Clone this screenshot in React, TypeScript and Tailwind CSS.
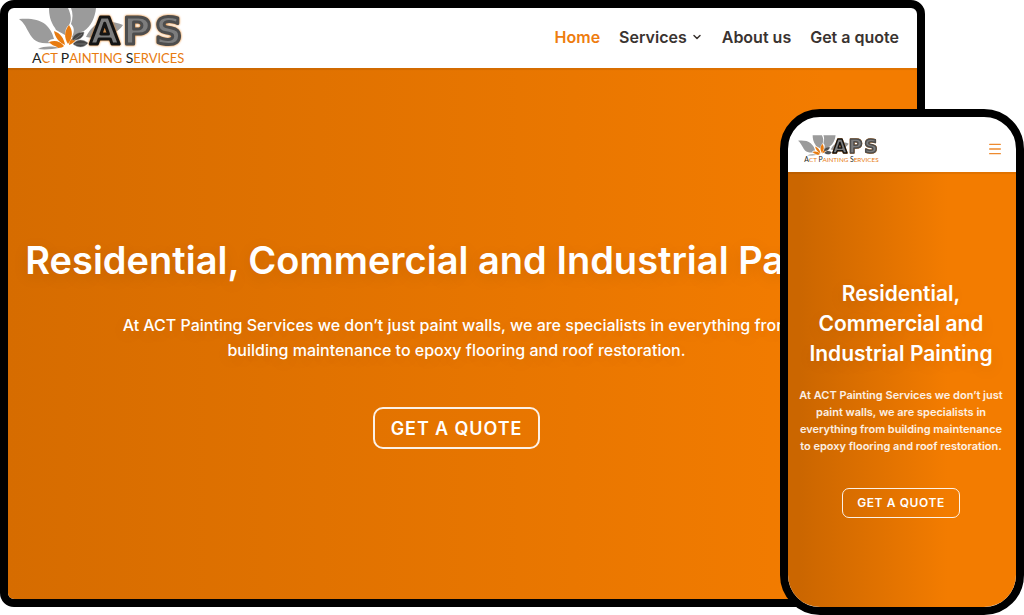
import { ChevronDown, Menu } from 'lucide-react';

const LEAD =
  'At ACT Painting Services we don’t just paint walls, we are specialists in everything from building maintenance to epoxy flooring and roof restoration.';

const navLinks = [
  { label: 'Home', active: true },
  { label: 'Services', hasMenu: true },
  { label: 'About us' },
  { label: 'Get a quote' },
];

function Logo({ className }: { className: string }) {
  return (
    <svg viewBox="0 0 168 56" className={className} role="img" aria-label="APS, ACT Painting Services">
      {/* Grey leaves */}
      <g fill="#9b9b9b">
        <path d="M0 11c10-1 20 0 26 5 6 5 8 11 9 15-3 0-5 1-6 3l4 1C16 37 13 30 9 23 6 17 4 14 0 11z" />
        <path d="M30 0h19c3 6 4 13 1 17-3 2-4 6-4 10l-9-5-1-2C31 13 30 6 30 0z" />
        <path d="M52 0h25c-1 10-5 18-12 23-4 1-8 4-11 7l-1-1c3-6 2-10-1-13 2-6 2-11 0-16z" />
        <path d="M67 29c4-8 9-14 18-15 7-1 14 1 19 3-6 9-20 16-37 12z" />
        <path d="M19 41c6-3 14-3 21-1-6 1-14 2-21 1z" />
      </g>
      {/* Orange petals */}
      <g fill="#e87b10">
        <path d="M35 23c6 2 10 7 11 14-5-2-10-7-11-14z" />
        <path d="M50 17c4 6 4 12-1 19-4-6-4-13 1-19z" />
        <path d="M30 34c6-2 11-1 15 4-1 1-3 2-6 2-1-2-6-2-9-6z" />
        <path d="M58 27c0 5-3 8-8 10 0-5 4-8 8-10z" />
      </g>
      {/* Dark leaves */}
      <g fill="#454545" stroke="#9b9b9b" strokeWidth="0.5">
        <path d="M53 32c1-5 5-8 12-8 0 5-5 9-12 8z" />
        <path d="M54 36c4-5 10-5 15-1-4 5-10 5-15 1z" />
        <path d="M55 32l8-6M56 36h11" />
      </g>
      <text
        x="71 104 136"
        y="36"
        fontFamily="'DejaVu Sans', sans-serif"
        fontWeight="700"
        fontSize="38"
        fill="#7d7d7d"
        stroke="#4d4d4d"
        strokeWidth="3"
        strokeLinejoin="round"
        className="[filter:drop-shadow(0_0_1px_#e87b10)]"
      >
        <tspan stroke="#141414">A</tspan>PS
      </text>
      <text x="13" y="55" fontFamily="Lato, sans-serif" fontSize="13" fill="#e87b10">
        <tspan fill="#222" fontSize="14">A</tspan>CT <tspan fill="#222" fontSize="14">P</tspan>AINTING{' '}
        <tspan fill="#222" fontSize="14">S</tspan>ERVICES
      </text>
    </svg>
  );
}

function DesktopPreview() {
  return (
    <section className="flex min-h-[607px] w-full flex-col overflow-hidden rounded-[14px] border-8 border-black bg-white">
      <header className="flex h-[60px] shrink-0 items-center justify-between pb-0.5 pl-[11px] pr-[18px]">
        <Logo className="h-14 w-[168px] self-start overflow-visible" />
        <nav className="flex items-center gap-[19px] text-[16px] font-semibold text-[#3a3330]">
          {navLinks.map((link) => (
            <a key={link.label} href="#" className={link.active ? 'text-[#ee7c0e]' : 'flex items-center gap-1'}>
              {link.label}
              {link.hasMenu && <ChevronDown size={12} strokeWidth={3} />}
            </a>
          ))}
        </nav>
      </header>
      <div className="flex flex-1 flex-col items-center bg-linear-to-r from-[#d66c00] to-[#f37c00] to-90% pr-3 pt-[168px] text-center text-white shadow-[inset_0_2px_1px_rgba(0,0,0,0.08)]">
        <h1 className="text-[38px] leading-[48px] font-semibold whitespace-nowrap [text-shadow:0_4px_16px_rgba(0,0,0,0.1)]">
          Residential, Commercial and Industrial Painting
        </h1>
        <p className="mt-[29px] max-w-[700px] text-[16px] leading-[25px] font-medium [text-shadow:0_4px_16px_rgba(0,0,0,0.1)]">
          {LEAD}
        </p>
        <button className="mt-11 h-[42px] rounded-[10px] border-2 border-white/90 px-4 text-[18px] font-semibold tracking-wider">
          GET A QUOTE
        </button>
      </div>
    </section>
  );
}

function PhonePreview() {
  return (
    <section className="absolute right-0 bottom-0 flex min-h-[506px] w-[244px] flex-col overflow-hidden rounded-[40px] border-8 border-black bg-white">
      <header className="flex h-[55px] shrink-0 items-center justify-between pt-2 pl-2.5 pr-[13px]">
        <Logo className="h-7 w-[82px] overflow-visible" />
        <button aria-label="Open menu" className="text-[#ee8a2e]">
          <Menu size={16} strokeWidth={2} />
        </button>
      </header>
      <div className="flex flex-1 flex-col items-center bg-linear-to-r from-[#cb6600] from-5% to-[#f37c00] to-70% pt-[107px] pr-2.5 pl-2 text-center text-white shadow-[inset_0_2px_1px_rgba(0,0,0,0.08)]">
        <h2 className="text-[21px] leading-[30px] font-semibold [text-shadow:0_4px_16px_rgba(0,0,0,0.1)]">
          Residential, Commercial and Industrial Painting
        </h2>
        <p className="mt-[18px] text-[11px] leading-[17px] font-semibold text-white/90">{LEAD}</p>
        <button className="mt-[33px] h-[30px] rounded-[7px] border border-white/90 px-3.5 text-[12px] font-semibold tracking-wider">
          GET A QUOTE
        </button>
      </div>
    </section>
  );
}

export default function App() {
  return (
    <main className="relative min-h-[615px] bg-white pr-[99px] font-['Inter',sans-serif]">
      <DesktopPreview />
      <PhonePreview />
    </main>
  );
}
